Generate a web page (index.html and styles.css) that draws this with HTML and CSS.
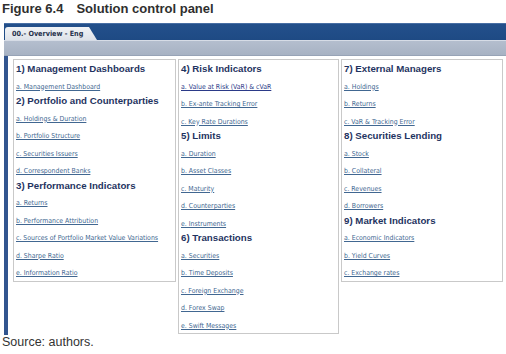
FILE: index.html
```html
<!DOCTYPE html>
<html lang="en">
  <head>
    <meta charset="UTF-8" />
    <meta name="viewport" content="width=device-width, initial-scale=1.0" />
    <title>Figure 6.4 Solution control panel</title>
    <link rel="stylesheet" href="styles.css">
  </head>
  <body>
    <h1 class="fig-title">Figure 6.4<span class="fig-gap"></span>Solution control panel</h1>

    <div class="panel">
      <div class="tabbar">
        <div class="tab">00.- Overview - Eng</div>
      </div>
      <div class="toolstrip"></div>

      <div class="board">
        <div class="menu-box">
          <h2>1) Management Dashboards</h2>
          <a href="#">a. Management Dashboard</a>
          <h2>2) Portfolio and Counterparties</h2>
          <a href="#">a. Holdings &amp; Duration</a>
          <a href="#">b. Portfolio Structure</a>
          <a href="#">c. Securities Issuers</a>
          <a href="#">d. Correspondent Banks</a>
          <h2>3) Performance Indicators</h2>
          <a href="#">a. Returns</a>
          <a href="#">b. Performance Attribution</a>
          <a href="#">c. Sources of Portfolio Market Value Variations</a>
          <a href="#">d. Sharpe Ratio</a>
          <a href="#">e. Information Ratio</a>
        </div>

        <div class="menu-box">
          <h2>4) Risk Indicators</h2>
          <a href="#" class="visited">a. Value at Risk (VaR) &amp; cVaR</a>
          <a href="#">b. Ex-ante Tracking Error</a>
          <a href="#">c. Key Rate Durations</a>
          <h2>5) Limits</h2>
          <a href="#">a. Duration</a>
          <a href="#">b. Asset Classes</a>
          <a href="#">c. Maturity</a>
          <a href="#">d. Counterparties</a>
          <a href="#">e. Instruments</a>
          <h2>6) Transactions</h2>
          <a href="#">a. Securities</a>
          <a href="#">b. Time Deposits</a>
          <a href="#">c. Foreign Exchange</a>
          <a href="#">d. Forex Swap</a>
          <a href="#">e. Swift Messages</a>
        </div>

        <div class="menu-box">
          <h2>7) External Managers</h2>
          <a href="#">a. Holdings</a>
          <a href="#">b. Returns</a>
          <a href="#">c. VaR &amp; Tracking Error</a>
          <h2>8) Securities Lending</h2>
          <a href="#">a. Stock</a>
          <a href="#">b. Collateral</a>
          <a href="#">c. Revenues</a>
          <a href="#">d. Borrowers</a>
          <h2>9) Market Indicators</h2>
          <a href="#">a. Economic Indicators</a>
          <a href="#">b. Yield Curves</a>
          <a href="#">c. Exchange rates</a>
        </div>
      </div>
    </div>

    <p class="source">Source: authors.</p>
  </body>
</html>
```

FILE: styles.css
```css
html,
body {
  margin: 0;
  padding: 0;
  background: #fff;
  font-family: "Liberation Sans", Arial, sans-serif;
  color: #333;
  overflow: hidden;
}
.fig-title {
  margin: 0 0 5px;
  padding-left: 2px;
  font-size: 13px;
  line-height: 18px;
  font-weight: bold;
  color: #2f2f2f;
}
.fig-gap {
  display: inline-block;
  width: 13px;
}
.panel {
  margin-left: 4px;
}
.tabbar {
  height: 17px;
  display: flex;
  align-items: flex-end;
  background: linear-gradient(180deg, #6d8dbd 0, #23508b 1px, #1e4a84 100%);
}
.tab {
  margin-left: 1px;
  width: 92px;
  height: 13px;
  padding-left: 7px;
  box-sizing: border-box;
  border-radius: 3px 0 0 0;
  background: linear-gradient(180deg, #f1f3f6, #dde2e9);
  clip-path: polygon(0 0, 84px 0, 92px 100%, 0 100%);
  font-family: "DejaVu Sans Condensed", "DejaVu Sans", sans-serif;
  font-stretch: condensed;
  font-size: 7.2px;
  font-weight: bold;
  line-height: 14px;
  color: #27324c;
}
.toolstrip {
  height: 16px;
  box-sizing: border-box;
  border-top: 1px solid #d6dce6;
  border-bottom: 1px solid #97a3b6;
  background: linear-gradient(180deg, #b4bece, #a7b2c3);
}
.board {
  display: grid;
  grid-template-columns: 163px 161px 162px;
  gap: 2px;
  align-items: start;
  padding: 3px 3px 1px 5px;
  border-left: 4px solid #32558f;
}
.menu-box {
  border: 1px solid #c9c9c9;
  padding: 2px 2px 0;
}
.menu-box h2 {
  margin: 0;
  font-size: 9.7px;
  line-height: 14.5px;
  font-weight: bold;
  color: #1f3461;
}
.menu-box a {
  display: block;
  margin-top: 4px;
  font-family: "DejaVu Sans Condensed", "DejaVu Sans", sans-serif;
  font-stretch: condensed;
  font-size: 6.9px;
  line-height: 13.5px;
  color: #416791;
  text-decoration: underline;
  white-space: nowrap;
}
.menu-box a.visited {
  color: #2b3a88;
}
.source {
  margin: 0;
  padding-left: 2px;
  font-size: 12.5px;
  line-height: 15px;
  color: #333;
}
```
